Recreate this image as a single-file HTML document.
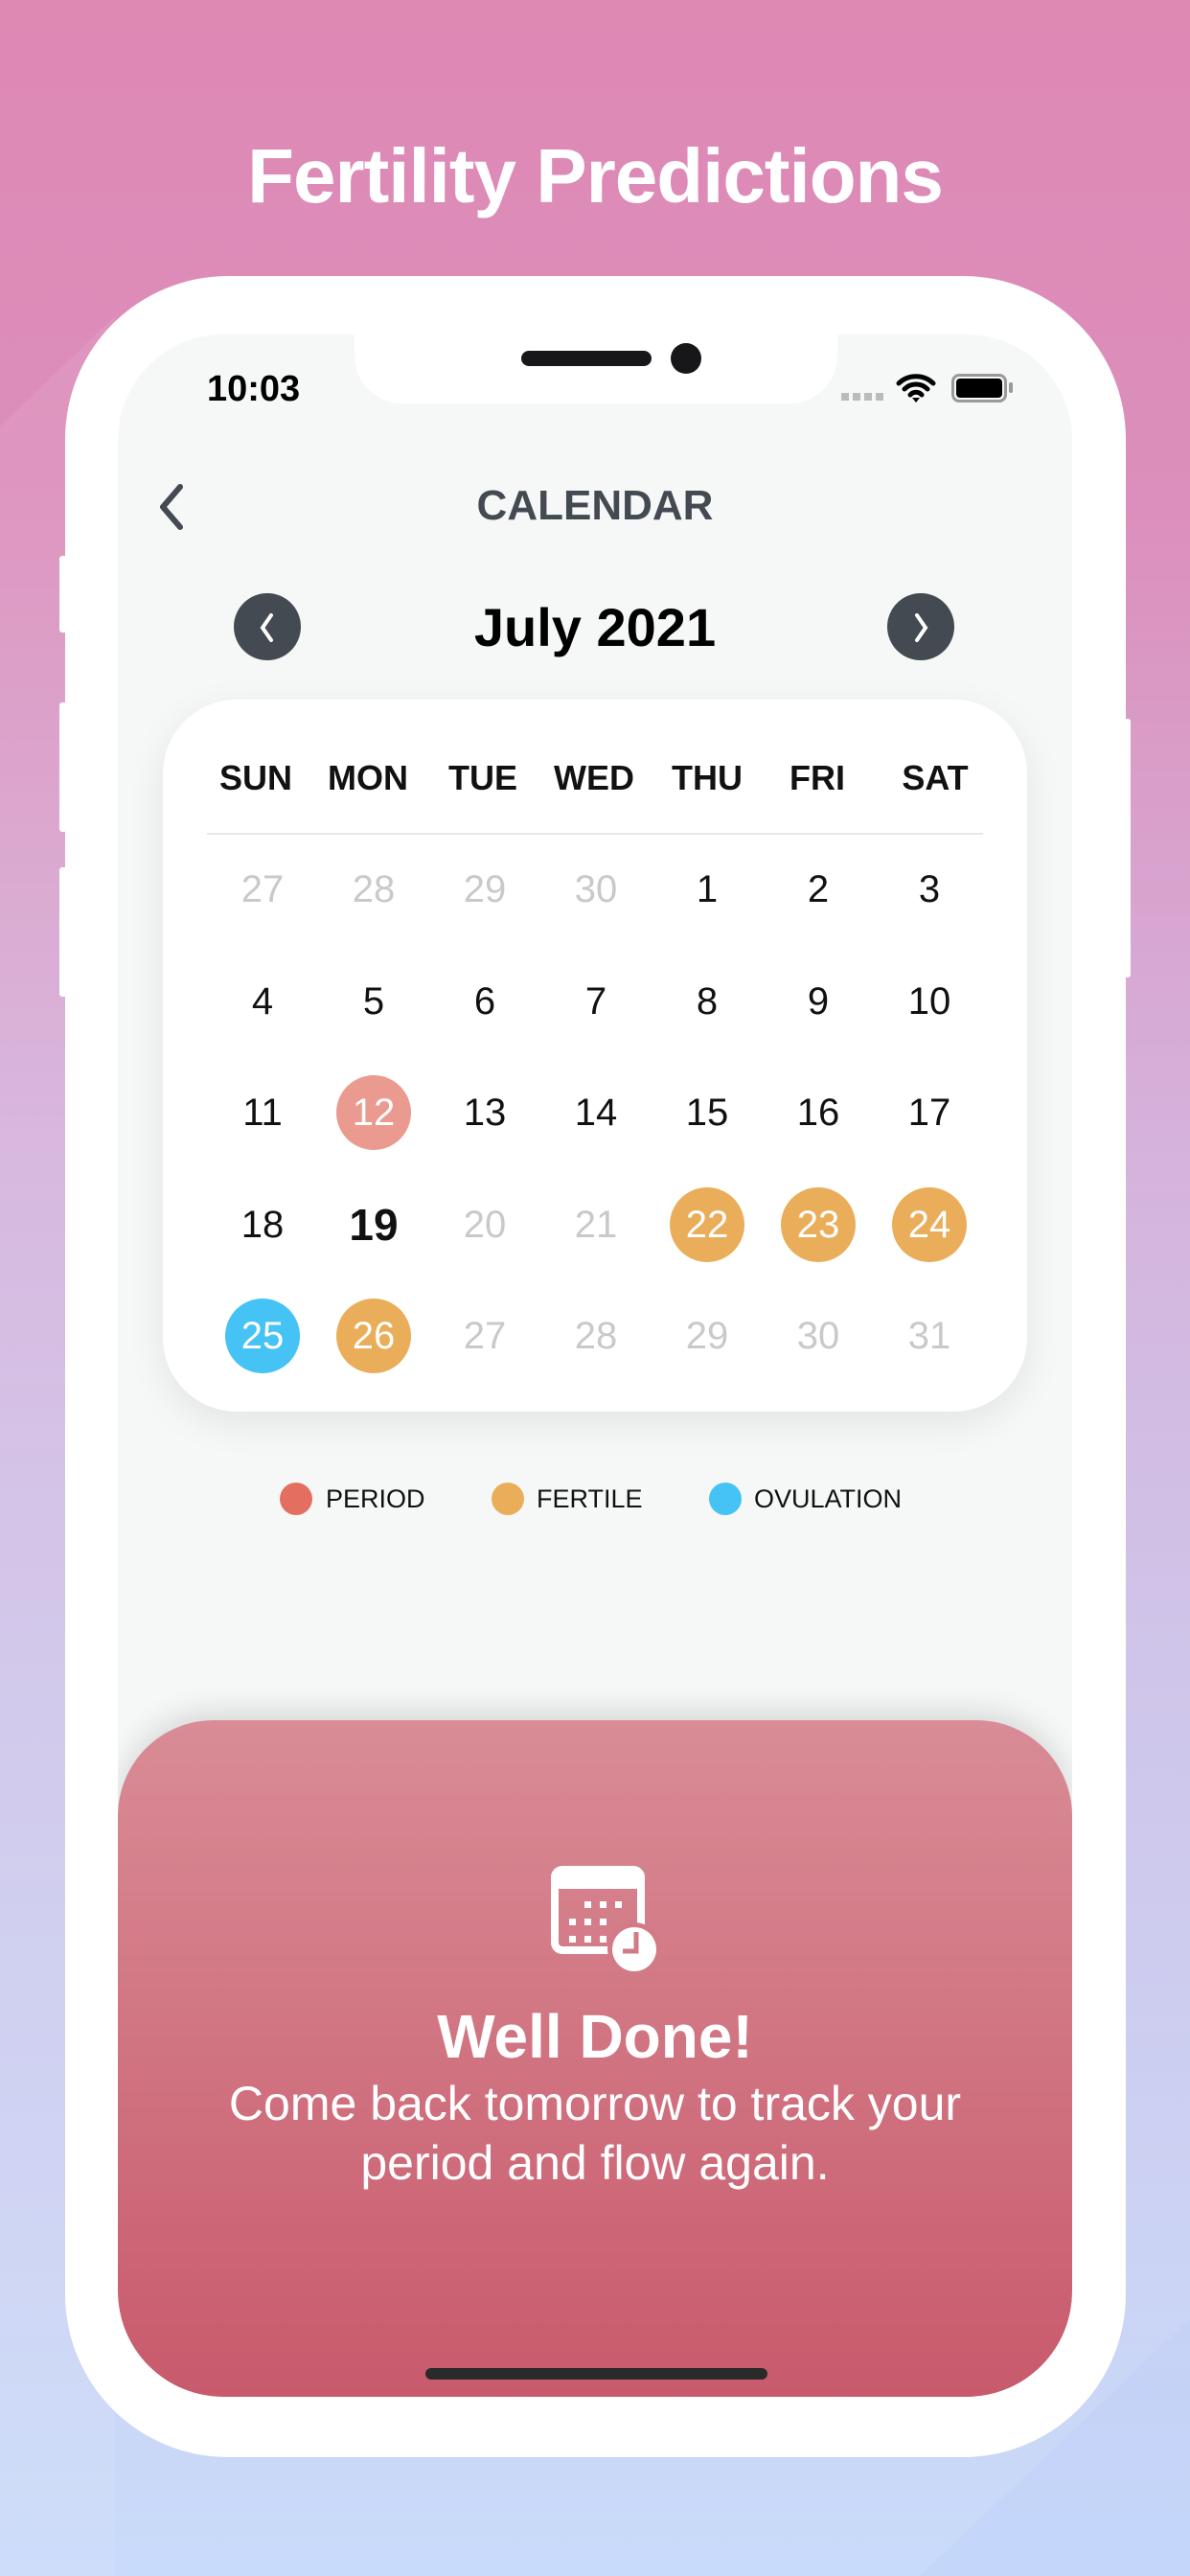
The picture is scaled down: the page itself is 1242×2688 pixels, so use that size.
<!DOCTYPE html>
<html><head><meta charset="utf-8"><style>
*{margin:0;padding:0;box-sizing:border-box}
body{width:1242px;height:2688px;overflow:hidden;position:relative;font-family:"Liberation Sans",sans-serif;background:linear-gradient(180deg,#de88b4 0%,#dc8fbc 20%,#d5b3dc 45%,#cfc5ea 65%,#c9dbfa 100%)}
.abs{position:absolute}
.title{left:0;width:1242px;top:138px;text-align:center;color:#fff;font-size:80px;font-weight:bold;letter-spacing:-1px}
.phone{left:68px;top:288px;width:1107px;height:2276px;background:#fff;border-radius:170px}
.screen{left:123px;top:349px;width:996px;height:2152px;background:#f6f8f7;border-radius:110px;overflow:hidden}
.notch{left:370px;top:340px;width:504px;height:81px;background:#fff;border-radius:0 0 50px 50px}
.c{text-align:center}
.row{position:absolute;left:0;width:100%}
.cell{position:absolute;width:80px;margin-left:-40px;text-align:center;font-size:40px;color:#111;line-height:80px}
.g{color:#c9c9c9}
.dot{border-radius:50%;color:#fff;width:78px;height:78px;margin-left:-39px;line-height:78px}
</style></head><body>
<svg class="abs" style="left:0;top:0" width="1242" height="2688"><polygon points="0,445 120,330 120,2688 0,2688" fill="rgba(255,255,255,0.08)"/><polygon points="1242,2420 1242,2688 960,2688" fill="rgba(120,150,255,0.06)"/></svg>
<div class="abs title">Fertility Predictions</div>
<div class="abs" style="left:62px;top:580px;width:8px;height:80px;background:#fff;border-radius:3px"></div>
<div class="abs" style="left:62px;top:733px;width:8px;height:135px;background:#fff;border-radius:3px"></div>
<div class="abs" style="left:62px;top:905px;width:8px;height:135px;background:#fff;border-radius:3px"></div>
<div class="abs" style="left:1172px;top:750px;width:8px;height:270px;background:#fff;border-radius:3px"></div>
<div class="abs phone"></div>
<div class="abs screen">
  <div class="abs" style="left:0;top:1446px;width:996px;height:706px;border-radius:100px 100px 110px 110px;background:linear-gradient(180deg,#d98c96,#c85a6c);box-shadow:0 -10px 30px rgba(0,0,0,0.12)"></div>
</div>
<div class="abs notch"></div>
<div class="abs" style="left:544px;top:366px;width:136px;height:16px;background:#17171a;border-radius:8px"></div>
<div class="abs" style="left:700px;top:358px;width:32px;height:32px;background:#17171a;border-radius:50%"></div>
<div class="abs" style="left:216px;top:385px;font-size:38px;font-weight:bold;color:#000">10:03</div>
<div class="abs" style="left:878px;top:410px;width:44px;height:8px;background:repeating-linear-gradient(90deg,#bbb 0 8px,transparent 8px 12px)"></div>
<svg class="abs" style="left:935px;top:388px" width="42" height="34" viewBox="0 0 42 34"><path d="M3 12a26 26 0 0 1 36 0M9 18a17 17 0 0 1 24 0M15 24a8 8 0 0 1 12 0" stroke="#000" stroke-width="5" fill="none" stroke-linecap="round"/><path d="M17 27l4 5 4-5z" fill="#000"/></svg>
<div class="abs" style="left:993px;top:390px;width:58px;height:30px;border:3px solid #999;border-radius:8px;padding:2px"><div style="width:100%;height:100%;background:#000;border-radius:4px"></div></div>
<div class="abs" style="left:1053px;top:399px;width:4px;height:11px;background:#999;border-radius:2px"></div>
<svg class="abs" style="left:160px;top:504px" width="36" height="50" viewBox="0 0 36 50"><path d="M28 4L10 25l18 21" stroke="#444a52" stroke-width="6" fill="none" stroke-linecap="round" stroke-linejoin="round"/></svg>
<div class="abs c" style="left:0;width:1242px;top:503px;font-size:44px;font-weight:bold;color:#444a52">CALENDAR</div>
<div class="abs" style="left:244px;top:619px;width:70px;height:70px;border-radius:50%;background:#444a52"></div>
<svg class="abs" style="left:262px;top:635px" width="34" height="40" viewBox="0 0 34 40"><path d="M21 7L12 20l9 13" stroke="#fff" stroke-width="4" fill="none" stroke-linecap="round"/></svg>
<div class="abs" style="left:926px;top:619px;width:70px;height:70px;border-radius:50%;background:#444a52"></div>
<svg class="abs" style="left:944px;top:635px" width="34" height="40" viewBox="0 0 34 40"><path d="M13 7l9 13-9 13" stroke="#fff" stroke-width="4" fill="none" stroke-linecap="round"/></svg>
<div class="abs c" style="left:0;width:1242px;top:622px;font-size:56px;font-weight:bold;color:#000">July 2021</div>
<div class="abs" style="left:170px;top:730px;width:902px;height:743px;background:#fff;border-radius:77px;box-shadow:0 12px 40px rgba(0,0,0,0.08)">
  <div class="row" style="top:42px">
    <div class="cell" style="left:97px;font-weight:bold;font-size:36px;width:120px;margin-left:-60px">SUN</div>
    <div class="cell" style="left:214px;font-weight:bold;font-size:36px;width:120px;margin-left:-60px">MON</div>
    <div class="cell" style="left:334px;font-weight:bold;font-size:36px;width:120px;margin-left:-60px">TUE</div>
    <div class="cell" style="left:450px;font-weight:bold;font-size:36px;width:120px;margin-left:-60px">WED</div>
    <div class="cell" style="left:568px;font-weight:bold;font-size:36px;width:120px;margin-left:-60px">THU</div>
    <div class="cell" style="left:683px;font-weight:bold;font-size:36px;width:120px;margin-left:-60px">FRI</div>
    <div class="cell" style="left:806px;font-weight:bold;font-size:36px;width:120px;margin-left:-60px">SAT</div>
  </div>
  <div class="abs" style="left:46px;top:139px;width:810px;height:2px;background:#e6e6e6"></div>
  <div class="row" style="top:158px">
    <div class="cell g" style="left:104px">27</div><div class="cell g" style="left:220px">28</div><div class="cell g" style="left:336px">29</div><div class="cell g" style="left:452px">30</div><div class="cell" style="left:568px">1</div><div class="cell" style="left:684px">2</div><div class="cell" style="left:800px">3</div>
  </div>
  <div class="row" style="top:275px">
    <div class="cell" style="left:104px">4</div><div class="cell" style="left:220px">5</div><div class="cell" style="left:336px">6</div><div class="cell" style="left:452px">7</div><div class="cell" style="left:568px">8</div><div class="cell" style="left:684px">9</div><div class="cell" style="left:800px">10</div>
  </div>
  <div class="row" style="top:391px">
    <div class="cell" style="left:104px">11</div><div class="cell dot" style="left:220px;top:1px;background:#eb9a8f">12</div><div class="cell" style="left:336px">13</div><div class="cell" style="left:452px">14</div><div class="cell" style="left:568px">15</div><div class="cell" style="left:684px">16</div><div class="cell" style="left:800px">17</div>
  </div>
  <div class="row" style="top:508px">
    <div class="cell" style="left:104px">18</div><div class="cell" style="left:220px;font-weight:bold;font-size:46px">19</div><div class="cell g" style="left:336px">20</div><div class="cell g" style="left:452px">21</div><div class="cell dot" style="left:568px;top:1px;background:#eaae5a">22</div><div class="cell dot" style="left:684px;top:1px;background:#eaae5a">23</div><div class="cell dot" style="left:800px;top:1px;background:#eaae5a">24</div>
  </div>
  <div class="row" style="top:624px">
    <div class="cell dot" style="left:104px;top:1px;background:#45c3f4">25</div><div class="cell dot" style="left:220px;top:1px;background:#eaae5a">26</div><div class="cell g" style="left:336px">27</div><div class="cell g" style="left:452px">28</div><div class="cell g" style="left:568px">29</div><div class="cell g" style="left:684px">30</div><div class="cell g" style="left:800px">31</div>
  </div>
</div>
<div class="abs" style="left:292px;top:1547px;width:34px;height:34px;border-radius:50%;background:#e46f60"></div>
<div class="abs" style="left:340px;top:1549px;font-size:27px;color:#111">PERIOD</div>
<div class="abs" style="left:513px;top:1547px;width:34px;height:34px;border-radius:50%;background:#eaae5a"></div>
<div class="abs" style="left:560px;top:1549px;font-size:27px;color:#111">FERTILE</div>
<div class="abs" style="left:740px;top:1547px;width:34px;height:34px;border-radius:50%;background:#45c3f4"></div>
<div class="abs" style="left:787px;top:1549px;font-size:27px;color:#111">OVULATION</div>
<svg class="abs" style="left:574px;top:1946px" width="116" height="120" viewBox="0 0 116 120"><rect x="5" y="5" width="90" height="84" rx="8" fill="none" stroke="#fff" stroke-width="8"/><rect x="5" y="5" width="90" height="20" rx="6" fill="#fff"/><g fill="#fff"><rect x="36" y="38" width="7" height="7"/><rect x="52" y="38" width="7" height="7"/><rect x="68" y="38" width="7" height="7"/><rect x="20" y="56" width="7" height="7"/><rect x="36" y="56" width="7" height="7"/><rect x="52" y="56" width="7" height="7"/><rect x="20" y="74" width="7" height="7"/><rect x="36" y="74" width="7" height="7"/><rect x="52" y="74" width="7" height="7"/></g><circle cx="88" cy="88" r="28" fill="#d27a85"/><circle cx="88" cy="88" r="23" fill="#fff"/><path d="M90 70v20H76" stroke="#d27a85" stroke-width="5" fill="none"/></svg>
<div class="abs c" style="left:0;width:1242px;top:2088px;font-size:64px;font-weight:bold;color:#fff">Well Done!</div>
<div class="abs c" style="left:0;width:1242px;top:2164px;font-size:50px;line-height:62px;color:#fff">Come back tomorrow to track your<br>period and flow again.</div>
<div class="abs" style="left:444px;top:2471px;width:357px;height:12px;background:#2a2a2a;border-radius:6px"></div>
</body></html>
